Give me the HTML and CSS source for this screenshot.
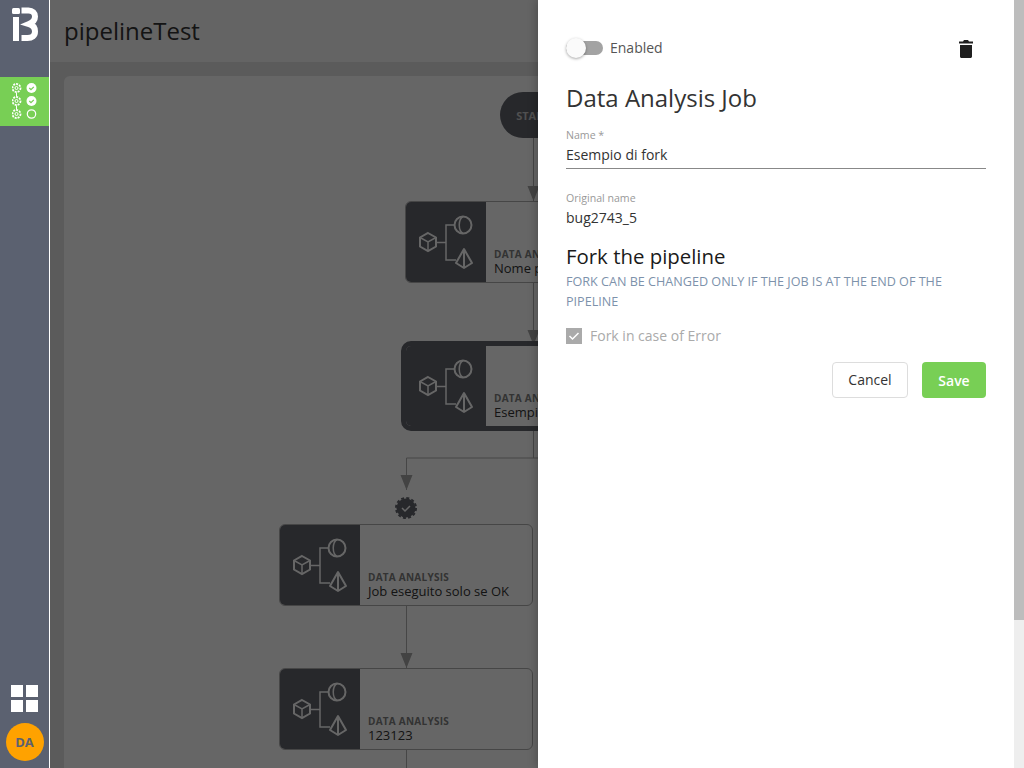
FILE: index.html
```html
<!DOCTYPE html>
<html lang="en">
<head>
    <meta charset="UTF-8">
    <title>pipelineTest</title>
    <link rel="stylesheet" href="styles.css">
</head>
<body>
    <svg class="defs" width="0" height="0">
        <symbol id="jobIcon" viewBox="0 0 80 80">
            <g fill="none" stroke="currentColor" stroke-width="2">
                <path d="M22 31l8 4.500v9l-8 4.500-8-4.500v-9z"/>
                <path d="M14 35.500l8 4.500 8-4.500M22 40v9" stroke-width="1.500"/>
                <path d="M30 40.500h10M48.500 23H40v35h10" stroke-width="1.500"/>
                <circle cx="57" cy="23" r="8.500"/>
                <path d="M57 14.500c-5 3-5 14 0 17" stroke-width="1.500"/>
                <path d="M58 47l8 14-8 5-8-5zM58 47v19" stroke-linejoin="round"/>
            </g>
        </symbol>
    </svg>

    <aside class="sidebar">
        <svg class="logo" width="26" height="35" viewBox="0 0 26 35">
            <rect x="0" y="1" width="8" height="6" rx="1.500" fill="#fff"/>
            <rect x="1" y="10" width="6" height="24" fill="#fff"/>
            <path d="M9.500 3.500h7c4 0 6.500 2.500 6.500 6 0 3.500-2.500 6-6 7.500 3.500 1 6 3.500 6 7.500 0 4.500-3 6.500-7.500 6.500H9.500" fill="none" stroke="#fff" stroke-width="6"/>
        </svg>
        <div class="nav-active">
            <svg width="30" height="36" viewBox="0 0 30 36">
                <g fill="none" stroke="#fff">
                    <g stroke-width="1.800" stroke-dasharray="2 1">
                        <circle cx="4.500" cy="5" r="4"/>
                        <circle cx="4.500" cy="18" r="4"/>
                        <circle cx="4.500" cy="31" r="4"/>
                    </g>
                    <g stroke-width="1">
                        <circle cx="4.500" cy="5" r="1.500"/>
                        <circle cx="4.500" cy="18" r="1.500"/>
                        <circle cx="4.500" cy="31" r="1.500"/>
                        <path d="M4.500 9.500v4M4.500 22.500v4"/>
                    </g>
                    <circle cx="19.500" cy="31" r="4.200" stroke-width="1.200"/>
                </g>
                <circle cx="19.500" cy="5" r="5" fill="#fff"/>
                <circle cx="19.500" cy="18" r="5" fill="#fff"/>
                <path d="M17.300 5l1.700 1.700 2.800-2.800M17.300 18l1.700 1.700 2.800-2.800" fill="none" stroke="#78cf55" stroke-width="1.300"/>
            </svg>
        </div>
        <div class="sidebar-bottom">
            <div class="apps-grid">
                <span></span><span></span><span></span><span></span>
            </div>
            <div class="avatar">DA</div>
        </div>
    </aside>

    <main class="main">
        <header class="page-header">
            <h1>pipelineTest</h1>
        </header>
        <section class="canvas">
            <svg class="links" width="960" height="692" viewBox="0 0 960 692">
                <g fill="none" stroke="#aeaeae" stroke-width="1">
                    <path d="M469.500 62v64M469.500 207v60M469.500 355v27M342.500 382h254M342.500 382v32M342.500 530v62M342.500 674v18M596.500 382v32"/>
                </g>
                <g fill="#a8a8a8">
                    <path d="M463.500 110h12l-6 15zM463.500 254h12l-6 15zM336.500 399h12l-6 15zM336.500 577h12l-6 15z"/>
                </g>
                <g transform="translate(342 432)">
                    <circle class="badge" r="9.500"/>
                    <circle class="badge-edge" r="10" stroke-dasharray="3 2.236"/>
                    <path d="M-4 0l3 3 5-5" fill="none" stroke="#fff" stroke-width="1.500"/>
                </g>
            </svg>

            <div class="start-node">START</div>

            <div class="node node-one">
                <div class="node-icon"><svg width="80" height="80"><use href="#jobIcon"/></svg></div>
                <div class="node-text">
                    <span class="node-type">DATA ANALYSIS</span>
                    <span class="node-name">Nome pipeline</span>
                </div>
            </div>
            <div class="node node-two selected">
                <div class="node-icon"><svg width="80" height="80"><use href="#jobIcon"/></svg></div>
                <div class="node-text">
                    <span class="node-type">DATA ANALYSIS</span>
                    <span class="node-name">Esempio di fork</span>
                </div>
            </div>
            <div class="node node-three">
                <div class="node-icon"><svg width="80" height="80"><use href="#jobIcon"/></svg></div>
                <div class="node-text">
                    <span class="node-type">DATA ANALYSIS</span>
                    <span class="node-name">Job eseguito solo se OK</span>
                </div>
            </div>
            <div class="node node-four">
                <div class="node-icon"><svg width="80" height="80"><use href="#jobIcon"/></svg></div>
                <div class="node-text">
                    <span class="node-type">DATA ANALYSIS</span>
                    <span class="node-name">123123</span>
                </div>
            </div>
        </section>
    </main>

    <div class="overlay"></div>

    <div class="drawer">
        <div class="drawer-body">
            <div class="drawer-top">
                <label class="toggle">
                    <span class="toggle-track"><span class="toggle-knob"></span></span>
                    <span class="toggle-text">Enabled</span>
                </label>
                <svg class="trash" width="14" height="18" viewBox="0 0 14 18">
                    <path d="M5 0h4l1 1.500h4v2H0v-2h4zM1 5h12v11.500c0 .8-.7 1.500-1.500 1.500h-9C1.700 18 1 17.300 1 16.500z" fill="#1f1f1f"/>
                </svg>
            </div>

            <h2 class="drawer-title">Data Analysis Job</h2>

            <div class="field field-input">
                <div class="field-label">Name *</div>
                <div class="field-value">Esempio di fork</div>
            </div>
            <div class="field">
                <div class="field-label">Original name</div>
                <div class="field-value">bug2743_5</div>
            </div>

            <h3 class="fork-title">Fork the pipeline</h3>
            <p class="fork-note">FORK CAN BE CHANGED ONLY IF THE JOB IS AT THE END OF THE PIPELINE</p>

            <div class="check-row">
                <span class="checkbox">
                    <svg width="16" height="16" viewBox="0 0 16 16"><path d="M3.500 8l3 3 6-6" fill="none" stroke="#fff" stroke-width="1.500"/></svg>
                </span>
                <span>Fork in case of Error</span>
            </div>

            <div class="actions">
                <button class="btn btn-cancel">Cancel</button>
                <button class="btn btn-save">Save</button>
            </div>
        </div>
        <div class="scrollbar"><div class="scrollbar-thumb"></div></div>
    </div>
</body>
</html>
```

FILE: styles.css
```css
* {
    margin: 0;
    padding: 0;
    box-sizing: border-box;
}

html, body {
    height: 100%;
    overflow: hidden;
}

body {
    font-family: 'Open Sans', sans-serif;
    display: flex;
    background: #e4e4e4;
    color: #333;
}

.defs {
    position: absolute;
}

.sidebar {
    position: relative;
    z-index: 20;
    flex: 0 0 50px;
    height: 100vh;
    background: #5b6170;
    border-right: 1px solid #fff;
    display: flex;
    flex-direction: column;
    align-items: center;
}

.logo {
    margin: 7px 0 0 0;
}

.nav-active {
    width: 49px;
    height: 49px;
    margin-top: 35px;
    background: #78cf55;
    display: flex;
    align-items: center;
    justify-content: center;
    padding: 0 0 2px 5px;
}

.sidebar-bottom {
    margin-top: auto;
    display: flex;
    flex-direction: column;
    align-items: center;
    gap: 11px;
    padding-bottom: 7px;
}

.apps-grid {
    display: grid;
    grid-template-columns: 12px 12px;
    grid-auto-rows: 12px;
    gap: 3px;
}

.apps-grid span {
    background: #fff;
}

.avatar {
    width: 38px;
    height: 38px;
    border-radius: 50%;
    background: #ffa200;
    color: #5b6170;
    font-size: 13px;
    font-weight: 700;
    display: flex;
    align-items: center;
    justify-content: center;
}

.main {
    flex: 1;
    min-width: 0;
    height: 100vh;
    display: flex;
    flex-direction: column;
}

.page-header {
    height: 62px;
    padding: 0 14px 2px;
    background: #fafafa;
    display: flex;
    align-items: center;
}

.page-header h1 {
    font-size: 24px;
    font-weight: 400;
    color: #333;
}

.canvas {
    position: relative;
    flex: 1;
    margin: 14px 0 0 14px;
    background: #fff;
    border-radius: 6px 0 0 0;
    overflow: hidden;
}

.links {
    position: absolute;
    left: 0;
    top: 0;
}

.badge {
    fill: #62646c;
}

.badge-edge {
    fill: none;
    stroke: #62646c;
    stroke-width: 2;
}

.start-node {
    position: absolute;
    left: 436px;
    top: 16px;
    width: 66px;
    height: 46px;
    border-radius: 23px;
    background: #62646c;
    color: #c8c8c8;
    font-size: 11px;
    font-weight: 700;
    display: flex;
    align-items: center;
    justify-content: center;
}

.node {
    position: absolute;
    width: 254px;
    height: 82px;
    display: flex;
    background: #fff;
    border: 1px solid #b0b0b0;
    border-radius: 6px;
    overflow: hidden;
}

.node-one {
    left: 341px;
    top: 125px;
}

.node-two {
    left: 337px;
    top: 265px;
    width: 262px;
    height: 90px;
}

.node-three {
    left: 215px;
    top: 448px;
}

.node-four {
    left: 215px;
    top: 592px;
}

.node.selected {
    border: 5px solid #62646c;
    border-radius: 10px;
}

.node-icon {
    flex: 0 0 80px;
    background: #62646c;
    color: #fff;
    height: 80px;
}

.node-text {
    flex: 1;
    padding: 0 7px 6px 8px;
    display: flex;
    flex-direction: column;
    justify-content: flex-end;
}

.node-type {
    margin-bottom: -1px;
    font-size: 10px;
    font-weight: 700;
    line-height: 13px;
    letter-spacing: 0.25px;
    color: #808080;
}

.node-name {
    font-size: 13px;
    line-height: 16px;
    color: #333;
}

.overlay {
    position: absolute;
    left: 50px;
    top: 0;
    right: 0;
    bottom: 0;
    z-index: 10;
    background: rgba(0, 0, 0, 0.6);
}

.drawer {
    position: absolute;
    z-index: 30;
    top: 0;
    right: 0;
    bottom: 0;
    width: 486px;
    background: #fff;
    box-shadow: 0 0 10px rgba(0, 0, 0, 0.3);
    display: flex;
}

.drawer-body {
    flex: 1;
    padding: 38px 28px 0;
}

.drawer-top {
    display: flex;
    align-items: center;
    justify-content: space-between;
    height: 22px;
    padding-right: 13px;
}

.toggle {
    display: flex;
    align-items: center;
    gap: 7px;
    margin-bottom: 2px;
    font-size: 14px;
    color: #555;
}

.toggle-track {
    position: relative;
    display: block;
    width: 37px;
    height: 14px;
    border-radius: 7px;
    background: #a3a3a3;
}

.toggle-knob {
    position: absolute;
    left: 0;
    top: -3px;
    width: 20px;
    height: 20px;
    border-radius: 50%;
    background: #fafafa;
    box-shadow: 0 1px 3px rgba(0, 0, 0, 0.35);
}

.toggle-text {
    margin-bottom: 2px;
}

.drawer-title {
    margin-top: 21px;
    font-size: 24px;
    font-weight: 400;
    line-height: 33px;
    color: #333;
}

.field {
    margin-top: 13px;
}

.field-label {
    padding-top: 1px;
    font-size: 10.6px;
    line-height: 15px;
    color: #999;
}

.field-value {
    font-size: 14px;
    line-height: 20px;
    margin-top: 2px;
    color: #333;
}

.field-input {
    height: 43px;
    margin-top: 12px;
    padding-top: 1px;
    border-bottom: 1px solid #888;
}

.field-input + .field {
    margin-top: 21px;
}

.fork-title {
    margin-top: 14px;
    font-size: 20.4px;
    font-weight: 400;
    line-height: 28px;
    color: #1a1a1a;
}

.fork-note {
    margin-top: 2px;
    font-size: 12.6px;
    line-height: 20px;
    color: #7d92ab;
}

.check-row {
    display: flex;
    align-items: center;
    gap: 8px;
    margin-top: 14px;
    font-size: 14px;
    color: #aaa;
}

.checkbox {
    display: block;
    width: 16px;
    height: 16px;
    background: #aaa;
}

.checkbox svg {
    display: block;
}

.actions {
    display: flex;
    justify-content: flex-end;
    gap: 14px;
    margin-top: 17px;
}

.btn {
    height: 36px;
    border-radius: 4px;
    font-family: inherit;
    font-size: 14px;
}

.btn-cancel {
    width: 76px;
    padding-bottom: 2px;
    background: #fff;
    border: 1px solid #ddd;
    color: #333;
}

.btn-save {
    width: 64px;
    background: #78cf55;
    border: none;
    color: #fff;
    font-weight: 600;
}

.scrollbar {
    flex: 0 0 10px;
    background: #eee;
}

.scrollbar-thumb {
    height: 620px;
    background: #bdbdbd;
}
```
